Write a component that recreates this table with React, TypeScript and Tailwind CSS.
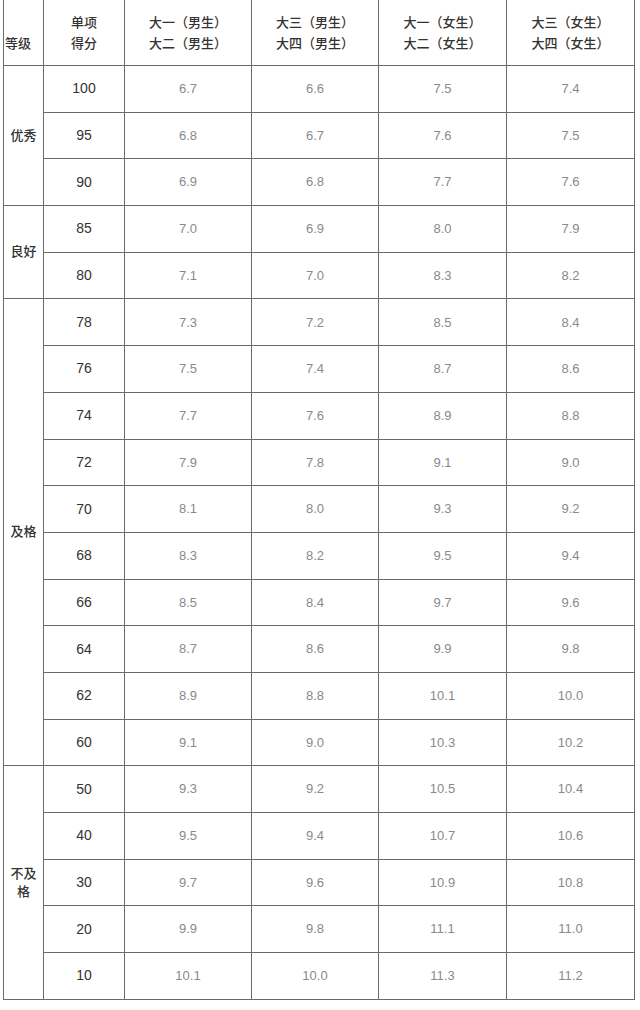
import React from "react";

const groups: { label: string; rows: [string, string, string, string, string][] }[] = [
  {
    label: "优秀",
    rows: [
      ["100", "6.7", "6.6", "7.5", "7.4"],
      ["95", "6.8", "6.7", "7.6", "7.5"],
      ["90", "6.9", "6.8", "7.7", "7.6"],
    ],
  },
  {
    label: "良好",
    rows: [
      ["85", "7.0", "6.9", "8.0", "7.9"],
      ["80", "7.1", "7.0", "8.3", "8.2"],
    ],
  },
  {
    label: "及格",
    rows: [
      ["78", "7.3", "7.2", "8.5", "8.4"],
      ["76", "7.5", "7.4", "8.7", "8.6"],
      ["74", "7.7", "7.6", "8.9", "8.8"],
      ["72", "7.9", "7.8", "9.1", "9.0"],
      ["70", "8.1", "8.0", "9.3", "9.2"],
      ["68", "8.3", "8.2", "9.5", "9.4"],
      ["66", "8.5", "8.4", "9.7", "9.6"],
      ["64", "8.7", "8.6", "9.9", "9.8"],
      ["62", "8.9", "8.8", "10.1", "10.0"],
      ["60", "9.1", "9.0", "10.3", "10.2"],
    ],
  },
  {
    label: "不及格",
    rows: [
      ["50", "9.3", "9.2", "10.5", "10.4"],
      ["40", "9.5", "9.4", "10.7", "10.6"],
      ["30", "9.7", "9.6", "10.9", "10.8"],
      ["20", "9.9", "9.8", "11.1", "11.0"],
      ["10", "10.1", "10.0", "11.3", "11.2"],
    ],
  },
];

const cell = "border border-[#6a6a6a] text-center align-middle p-0";

export default function App() {
  return (
    <div
      className="w-[640px] h-[1010px] bg-white overflow-hidden"
      style={{ fontFamily: '"Liberation Sans", "Noto Sans CJK SC", sans-serif' }}
    >
      <table className="ml-[3px] border-collapse table-fixed w-[632px] -mt-[1px]">
        <colgroup>
          <col className="w-[40px]" />
          <col className="w-[81px]" />
          <col className="w-[127px]" />
          <col className="w-[127px]" />
          <col className="w-[128px]" />
          <col className="w-[128px]" />
        </colgroup>
        <thead>
          <tr className="h-[66px]">
            <th className={`${cell} text-left pl-[1px] pt-[22px] text-[13px] font-medium text-[#333]`}>等级</th>
            <th className={`${cell} text-[13px] font-medium text-[#333] leading-[21px]`}>
              单项
              <br />
              得分
            </th>
            <th className={`${cell} text-[13px] font-medium text-[#333] leading-[21px]`}>
              大一（男生）
              <br />
              大二（男生）
            </th>
            <th className={`${cell} text-[13px] font-medium text-[#333] leading-[21px]`}>
              大三（男生）
              <br />
              大四（男生）
            </th>
            <th className={`${cell} text-[13px] font-medium text-[#333] leading-[21px]`}>
              大一（女生）
              <br />
              大二（女生）
            </th>
            <th className={`${cell} text-[13px] font-medium text-[#333] leading-[21px]`}>
              大三（女生）
              <br />
              大四（女生）
            </th>
          </tr>
        </thead>
        <tbody>
          {groups.map((g) =>
            g.rows.map((r, i) => (
              <tr key={g.label + r[0]} className="h-[46.7px]">
                {i === 0 && (
                  <td
                    rowSpan={g.rows.length}
                    className={`${cell} text-[13px] font-medium text-[#333] leading-[18px] px-[5px]`}
                  >
                    {g.label}
                  </td>
                )}
                <td className={`${cell} text-[14px] text-[#333]`}>{r[0]}</td>
                <td className={`${cell} text-[13px] text-[#8a8a8a]`}>{r[1]}</td>
                <td className={`${cell} text-[13px] text-[#8a8a8a]`}>{r[2]}</td>
                <td className={`${cell} text-[13px] text-[#8a8a8a]`}>{r[3]}</td>
                <td className={`${cell} text-[13px] text-[#8a8a8a]`}>{r[4]}</td>
              </tr>
            ))
          )}
        </tbody>
      </table>
    </div>
  );
}
